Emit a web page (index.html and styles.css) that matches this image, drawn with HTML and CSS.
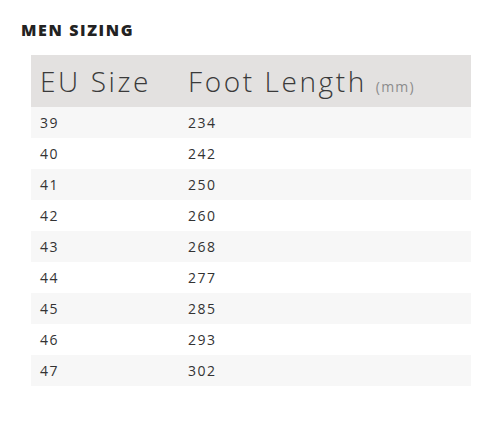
FILE: index.html
```html
<!DOCTYPE html>
<html>
<head>
<meta charset="utf-8">
<link rel="stylesheet" href="styles.css">
</head>
<body>
<h2 class="title">MEN SIZING</h2>
<table class="sizes">
  <colgroup><col class="col1"><col class="col2"></colgroup>
  <thead>
    <tr><th>EU Size</th><th>Foot Length<span class="unit">(mm)</span></th></tr>
  </thead>
  <tbody>
    <tr><td>39</td><td>234</td></tr>
    <tr><td>40</td><td>242</td></tr>
    <tr><td>41</td><td>250</td></tr>
    <tr><td>42</td><td>260</td></tr>
    <tr><td>43</td><td>268</td></tr>
    <tr><td>44</td><td>277</td></tr>
    <tr><td>45</td><td>285</td></tr>
    <tr><td>46</td><td>293</td></tr>
    <tr><td>47</td><td>302</td></tr>
  </tbody>
</table>
</body>
</html>
```
FILE: styles.css
```css
html, body { margin: 0; padding: 0; background: #fff; }
body { padding: 20px 29px 0 21px; font-family: "Open Sans", "Liberation Sans", sans-serif; color: #333; }
.title {
  margin: 0;
  font-family: "Open Sans", sans-serif;
  font-weight: 800;
  font-size: 16px;
  line-height: 20px;
  letter-spacing: 1.6px;
  color: #222;
}
.sizes {
  margin: 15px 0 0 10px;
  width: 440px;
  border-collapse: collapse;
  table-layout: fixed;
}
.col1 { width: 148px; }
.col2 { width: 292px; }
.sizes th {
  background: #e3e1e0;
  height: 52px;
  padding: 0 0 0 9px;
  text-align: left;
  font-weight: 300;
  font-size: 28px;
  color: #3a3a3a;
  letter-spacing: 2.6px;
  vertical-align: middle;
  white-space: nowrap;
}
.unit { font-size: 14px; font-weight: 400; color: #8c8c8c; letter-spacing: 1.2px; margin-left: 9px; }
.sizes td {
  height: 31px;
  padding: 0 0 0 9px;
  font-size: 14px;
  letter-spacing: 1.5px;
  color: #333;
  vertical-align: middle;
}
.sizes tbody tr:nth-child(odd) td { background: #f7f7f7; }
```
